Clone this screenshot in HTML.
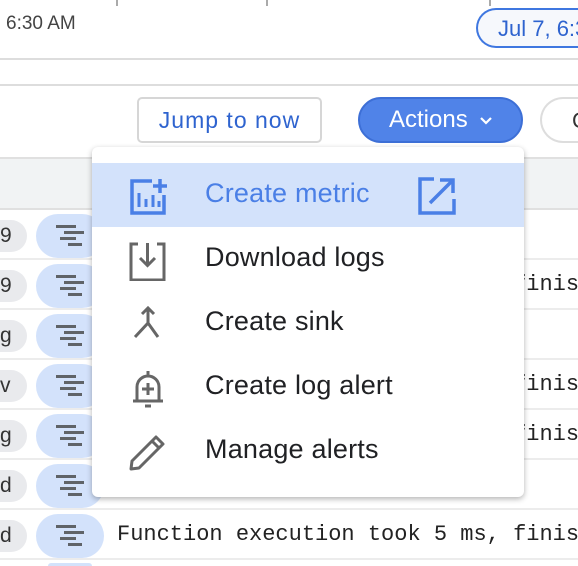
<!DOCTYPE html>
<html><head><style>
*{margin:0;padding:0;box-sizing:border-box}
html,body{width:578px;height:566px;overflow:hidden}
body{background:#fff;font-family:"Liberation Sans",Roboto,sans-serif}
#w{position:relative;width:578px;height:566px;overflow:hidden}
.abs{position:absolute}
.row{position:absolute;left:0;width:578px;height:50px;border-bottom:2px solid #ececec;overflow:hidden}
.gp{position:absolute;left:-20px;top:10px;width:47px;height:32px;border-radius:16px;background:#e9eaed;font-size:21px;color:#333;padding-left:20px;line-height:32px}
.bp{position:absolute;left:36px;top:4px;width:68px;height:44px;border-radius:22px;background:#d3e2fb}
.bp i{position:absolute;height:3px;background:#5f6368}
.msg{position:absolute;left:117px;top:12px;font-family:"Liberation Mono",monospace;font-size:22px;color:#222;white-space:nowrap}
.menu{position:absolute;left:92px;top:147px;width:432px;height:350px;background:#fff;border-radius:6px;box-shadow:0 2px 6px rgba(0,0,0,.3)}
.it{position:absolute;left:0;width:432px;height:64px}
.it span{position:absolute;left:113px;top:15px;font-size:27px;color:#202124;letter-spacing:.2px}
.it svg{position:absolute;left:36px;top:14px}
</style></head><body><div id="w">
<div class="abs" style="left:116px;top:0;width:2px;height:6px;background:#aaa"></div>
<div class="abs" style="left:266px;top:0;width:2px;height:6px;background:#aaa"></div>
<div class="abs" style="left:489px;top:0;width:2px;height:6px;background:#aaa"></div>
<div class="abs" style="left:6px;top:13px;font-size:19px;color:#444">6:30 AM</div>
<div class="abs" style="left:476px;top:8px;width:102px;height:40px;border:2px solid #3f77e0;border-right:none;border-radius:20px 0 0 20px;background:#f6f8fc;color:#2e63cf;font-size:22px;padding:6px 0 0 20px;white-space:nowrap;overflow:hidden">Jul 7, 6:30</div>
<div class="abs" style="left:0;top:58px;width:578px;height:2px;background:#ddd"></div>
<div class="abs" style="left:0;top:84px;width:578px;height:2px;background:#ddd"></div>
<div class="abs" style="left:137px;top:97px;width:185px;height:46px;border:2px solid #d6d6d6;border-radius:5px;color:#2e63cf;font-size:23px;text-align:center;line-height:42px;letter-spacing:1px">Jump to now</div>
<div class="abs" style="left:358px;top:97px;width:165px;height:46px;border:2px solid #3d6fd6;border-radius:23px;background:#5083e8;color:#fff;font-size:24px;line-height:42px;padding-left:29px">Actions <svg width="16" height="12" viewBox="0 0 16 12" style="margin-left:4px"><path d="M3 3l5 5 5-5" stroke="#fff" stroke-width="2.2" fill="none"/></svg></div>
<div class="abs" style="left:540px;top:97px;width:38px;height:46px;border:2px solid #ddd;border-right:none;border-radius:23px 0 0 23px;font-size:22px;padding:9px 0 0 30px;color:#333;overflow:hidden">C</div>
<div class="abs" style="left:0;top:157px;width:578px;height:53px;background:#f1f3f4;border-top:2px solid #e0e0e0;border-bottom:2px solid #e0e0e0"></div>
<div class="row" style="top:210px"><div class="gp">9</div><div class="bp"><i style="left:20px;top:11px;width:20px"></i><i style="left:28px;top:17px;width:20px"></i><i style="left:24px;top:23px;width:16px"></i><i style="left:32px;top:29px;width:14px"></i></div></div>
<div class="row" style="top:260px"><div class="gp">9</div><div class="bp"><i style="left:20px;top:11px;width:20px"></i><i style="left:28px;top:17px;width:20px"></i><i style="left:24px;top:23px;width:16px"></i><i style="left:32px;top:29px;width:14px"></i></div><div class="msg">Function execution took 5 ms, finish</div></div>
<div class="row" style="top:310px"><div class="gp">g</div><div class="bp"><i style="left:20px;top:11px;width:20px"></i><i style="left:28px;top:17px;width:20px"></i><i style="left:24px;top:23px;width:16px"></i><i style="left:32px;top:29px;width:14px"></i></div></div>
<div class="row" style="top:360px"><div class="gp">v</div><div class="bp"><i style="left:20px;top:11px;width:20px"></i><i style="left:28px;top:17px;width:20px"></i><i style="left:24px;top:23px;width:16px"></i><i style="left:32px;top:29px;width:14px"></i></div><div class="msg">Function execution took 5 ms, finish</div></div>
<div class="row" style="top:410px"><div class="gp">g</div><div class="bp"><i style="left:20px;top:11px;width:20px"></i><i style="left:28px;top:17px;width:20px"></i><i style="left:24px;top:23px;width:16px"></i><i style="left:32px;top:29px;width:14px"></i></div><div class="msg">Function execution took 5 ms, finish</div></div>
<div class="row" style="top:460px"><div class="gp">d</div><div class="bp"><i style="left:20px;top:11px;width:20px"></i><i style="left:28px;top:17px;width:20px"></i><i style="left:24px;top:23px;width:16px"></i><i style="left:32px;top:29px;width:14px"></i></div></div>
<div class="row" style="top:510px"><div class="gp">d</div><div class="bp"><i style="left:20px;top:11px;width:20px"></i><i style="left:28px;top:17px;width:20px"></i><i style="left:24px;top:23px;width:16px"></i><i style="left:32px;top:29px;width:14px"></i></div><div class="msg">Function execution took 5 ms, finish</div></div>
<div class="abs" style="left:48px;top:563px;width:44px;height:3px;border-radius:3px 3px 0 0;background:#d3e2fb"></div>
<div class="menu">
<div class="it" style="top:16px;background:#d3e2fb"><svg width="40" height="40" viewBox="0 0 40 40"><path d="M24 4H4v32h32V18" stroke="#4a7fe6" stroke-width="3.5" fill="none"/><path d="M32 2v14M25 9h14" stroke="#4a7fe6" stroke-width="3.5"/><path d="M11 16v14M18 22v8M25 18v12M31 24v6" stroke="#4a7fe6" stroke-width="3"/></svg><span style="color:#4a7fe6">Create metric</span><svg style="left:326px" width="38" height="38" viewBox="0 0 38 38"><path d="M16 2H2v34h34V22" stroke="#4a7fe6" stroke-width="3.5" fill="none"/><path d="M12 26L34 4M22 3h13v13" stroke="#4a7fe6" stroke-width="3.5" fill="none"/></svg></div>
<div class="it" style="top:80px"><svg width="40" height="40" viewBox="0 0 40 40"><path d="M10 3H3v36h33V3h-7" stroke="#666" stroke-width="3" fill="none"/><path d="M19.5 2v22M12 17l7.5 7.5L27 17" stroke="#666" stroke-width="3" fill="none"/></svg><span>Download logs</span></div>
<div class="it" style="top:144px"><svg width="40" height="40" viewBox="0 0 40 40"><path d="M20 4v14L7 32M20 18l10 14M14 9l6-6 6 6" stroke="#666" stroke-width="3" fill="none"/></svg><span>Create sink</span></div>
<div class="it" style="top:208px"><svg width="40" height="40" viewBox="0 0 40 40"><path d="M9 32V18a11 11 0 0 1 22 0v14M5 32h30M17 37h6M20 2v5" stroke="#666" stroke-width="3" fill="none"/><path d="M20 14v12M14 20h12" stroke="#666" stroke-width="3"/></svg><span>Create log alert</span></div>
<div class="it" style="top:272px"><svg width="40" height="40" viewBox="0 0 40 40"><path d="M3 36l1-8L28 4l7 7-24 24zM24 8l7 7" stroke="#666" stroke-width="3" fill="none" stroke-linejoin="round"/></svg><span>Manage alerts</span></div>
</div>
</div></body></html>
